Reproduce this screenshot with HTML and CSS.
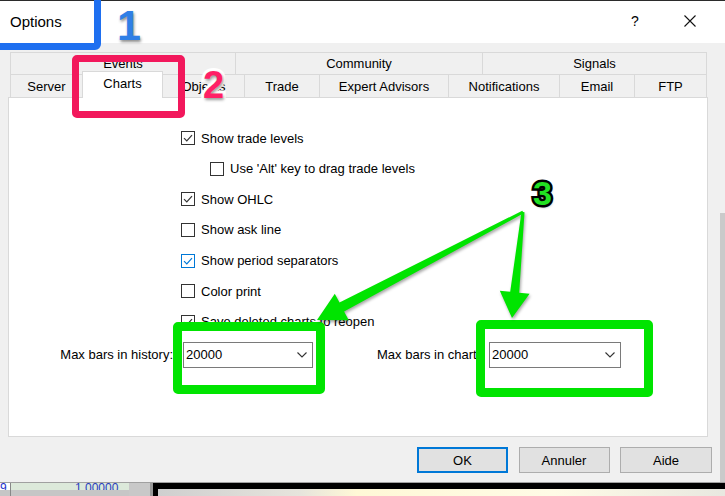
FILE: index.html
```html
<!DOCTYPE html>
<html>
<head>
<meta charset="utf-8">
<title>Options</title>
<link rel="stylesheet" href="styles.css">
</head>
<body>
<div class="screen">
  <div class="dialog">
    <div class="titlebar">
      <span class="title">Options</span>
      <span class="tb-help">?</span>
      <svg class="tb-close" width="12" height="12" viewBox="0 0 12 12"><path d="M0.5 0.5L11.5 11.5M11.5 0.5L0.5 11.5"/></svg>
    </div>
    <div class="dlg-body">
      <div class="tabs">
        <div class="tabrow back">
          <div class="tab t-events">Events</div>
          <div class="tab t-community">Community</div>
          <div class="tab t-signals">Signals</div>
        </div>
        <div class="tabrow front">
          <div class="tab t-server">Server</div>
          <div class="tab t-charts sel">Charts</div>
          <div class="tab t-objects">Objects</div>
          <div class="tab t-trade">Trade</div>
          <div class="tab t-expert">Expert Advisors</div>
          <div class="tab t-notif">Notifications</div>
          <div class="tab t-email">Email</div>
          <div class="tab t-ftp">FTP</div>
        </div>
      </div>
      <div class="panel">
        <div class="checks">
          <label class="chk"><span class="cb"><svg viewBox="0 0 12 12"><path d="M2 6.2L4.8 9L10 3.2"/></svg></span>Show trade levels</label>
          <label class="chk indent"><span class="cb"></span>Use 'Alt' key to drag trade levels</label>
          <label class="chk"><span class="cb"><svg viewBox="0 0 12 12"><path d="M2 6.2L4.8 9L10 3.2"/></svg></span>Show OHLC</label>
          <label class="chk"><span class="cb"></span>Show ask line</label>
          <label class="chk"><span class="cb focus"><svg viewBox="0 0 12 12"><path d="M2 6.2L4.8 9L10 3.2"/></svg></span>Show period separators</label>
          <label class="chk"><span class="cb"></span>Color print</label>
          <label class="chk"><span class="cb"><svg viewBox="0 0 12 12"><path d="M2 6.2L4.8 9L10 3.2"/></svg></span>Save deleted charts to reopen</label>
        </div>
        <div class="maxbars">
          <span class="lbl1">Max bars in history:</span>
          <div class="combo c1"><span>20000</span><svg width="10" height="6" viewBox="0 0 10 6"><path d="M0.5 0.5L5 5L9.5 0.5"/></svg></div>
          <span class="lbl2">Max bars in chart:</span>
          <div class="combo c2"><span>20000</span><svg width="10" height="6" viewBox="0 0 10 6"><path d="M0.5 0.5L5 5L9.5 0.5"/></svg></div>
        </div>
      </div>
      <div class="buttons">
        <div class="btn default">OK</div>
        <div class="btn">Annuler</div>
        <div class="btn aide">Aide</div>
      </div>
    </div>
  </div>
  <div class="taskbar">
    <div class="tb-seg tb-a"><span>9</span></div>
    <div class="tb-seg tb-b"><span>1.00000</span></div>
    <div class="tb-seg tb-c"></div>
    <div class="tb-seg tb-d"></div>
  </div>

  <!-- annotations -->
  <div class="box-blue"></div>
  <div class="num num1">1</div>
  <div class="box-pink"></div>
  <div class="num num2">2</div>
  <div class="box-green g1"></div>
  <div class="box-green g2"></div>
  <svg class="arrows" width="725" height="496" viewBox="0 0 725 496">
    <polygon points="522.3,210.7 339.5,302.6 334.8,293.7 317,320 348.8,320.3 344.1,311.4 523.7,213.3"/>
    <polygon points="521.5,211.8 510.2,291.7 499.8,290.7 512,318 529.6,293.7 519.2,292.7 524.5,212.2"/>
  </svg>
  <div class="num num3">3</div>
</div>
</body>
</html>
```
FILE: styles.css
```css
* { box-sizing: border-box; }
html, body { margin: 0; padding: 0; }
body {
  width: 725px;
  height: 496px;
  overflow: hidden;
  font-family: "Liberation Sans", Arial, sans-serif;
  font-size: 13px;
  color: #000;
  background: #fff;
}
.screen { position: relative; width: 725px; height: 496px; overflow: hidden; }

.dialog { display: flex; flex-direction: column; height: 483px; border-bottom: 1px solid #a0a0a0; }

.titlebar {
  height: 43px;
  flex: none;
  background: #fff;
  border-top: 1px solid #2b2b2b;
  display: flex;
  align-items: center;
  padding: 0 0 2px 10px;
}
.title { font-size: 15px; flex: 1; }
.tb-help { font-size: 14px; width: 8px; text-align: center; margin-right: 45px; }
.tb-close { margin-right: 29px; }
.tb-close path { stroke: #111; stroke-width: 1.1; fill: none; }

.dlg-body {
  flex: 1;
  display: flex;
  flex-direction: column;
  padding: 9px 0 0 8px;
  background: linear-gradient(#cacaca, #cacaca) right 0 top 170px / 5px 100% no-repeat, #f0f0f0;
}

.tabs { margin-left: 2px; width: 697px; }
.tabrow { display: flex; }
.tabrow.back { height: 22px; }
.tabrow.front { height: 23px; align-items: flex-end; }
.tab {
  height: 100%;
  border-top: 1px solid #d9d9d9;
  border-left: 1px solid #d9d9d9;
  display: flex;
  align-items: center;
  justify-content: center;
  white-space: nowrap;
  background: #f0f0f0;
}
.tab:last-child { border-right: 1px solid #d9d9d9; }
.tab.sel {
  height: 27px;
  margin-bottom: -1px;
  position: relative;
  z-index: 1;
  background: #fff;
  border-right: 1px solid #d9d9d9;
  padding-bottom: 4px;
}
.tab.sel + .tab { border-left: none; }

.t-events { width: 225px; }
.t-community { width: 247px; }
.t-signals { width: 225px; }
.t-server { width: 72px; }
.t-charts { width: 81px; }
.t-objects { width: 81px; }
.t-trade { width: 75px; }
.t-expert { width: 129px; }
.t-notif { width: 111px; }
.t-email { width: 75px; }
.t-ftp { width: 73px; }

.panel {
  width: 700px;
  height: 340px;
  flex: none;
  background: #fff;
  border: 1px solid #d9d9d9;
  padding-top: 24.7px;
}
.checks { display: flex; flex-direction: column; padding-left: 172px; }
.chk { height: 30.67px; display: flex; align-items: center; gap: 6px; }
.chk.indent { padding-left: 29px; }
.cb {
  width: 14px;
  height: 14px;
  flex: none;
  border: 1px solid #333;
  background: #fff;
  display: flex;
}
.cb svg { width: 12px; height: 12px; }
.cb path { stroke: #333; stroke-width: 1.2; fill: none; }
.cb.focus { border-color: #0078d7; }
.cb.focus path { stroke: #0078d7; }

.maxbars { display: flex; align-items: center; height: 26px; margin-top: 4.7px; padding-left: 44px; }
.lbl1 { width: 120px; text-align: right; margin-right: 10px; white-space: nowrap; }
.lbl2 { width: 112px; margin-left: 64px; white-space: nowrap; }
.combo {
  height: 26px;
  border: 1px solid #7a7a7a;
  background: #fff;
  display: flex;
  align-items: center;
  justify-content: space-between;
  padding: 0 5px 0 2px;
}
.combo.c1 { width: 130px; }
.combo.c2 { width: 132px; }
.combo path { stroke: #333; stroke-width: 1.1; fill: none; }

.buttons { display: flex; justify-content: flex-end; gap: 10.5px; padding-right: 13px; margin-top: 10px; }
.btn {
  width: 91px;
  height: 26px;
  background: #e1e1e1;
  border: 1px solid #adadad;
  display: flex;
  align-items: center;
  justify-content: center;
}
.btn.default { border: 2px solid #0078d7; }
.btn.aide { width: 92px; }

.taskbar { height: 13px; display: flex; }
.tb-seg { height: 13px; }
.tb-seg span { display: block; height: 7px; overflow: hidden; font-size: 12px; line-height: 11px; }
.tb-a { width: 10px; background: linear-gradient(#fff 0 7px, #c6c6c6 7px); color: #2233cc; }
.tb-b {
  width: 140px;
  border-left: 1px solid #888;
  background: linear-gradient(90deg, transparent 0 118px, #c8c8c8 118px), linear-gradient(#dce9da 0 7px, #c6c6c6 7px 95px);
  color: #2a3ec0;
  padding-left: 64px;
}
.tb-c { width: 8px; background: linear-gradient(90deg, #9a9a9a 0 3px, #000 3px); }
.tb-d {
  flex: 1;
  background: linear-gradient(#000 0 6px, transparent 6px), linear-gradient(90deg, #cfcfcf 0, #e6e4dc 25%, #fff8d6 35%, #fffbe6 70%, #e8e8e0 100%);
}

/* annotations */
.box-blue {
  position: absolute;
  left: -12px;
  top: -12px;
  width: 113px;
  height: 62px;
  border: 7px solid #1e6ff0;
  border-radius: 6px;
}
.box-pink {
  position: absolute;
  left: 72px;
  top: 55px;
  width: 113px;
  height: 63px;
  border: 7px solid #f2185c;
  border-radius: 5px;
}
.box-green {
  position: absolute;
  border: 9px solid #00e400;
  border-radius: 5px;
}
.box-green.g1 { left: 173px; top: 322px; width: 152px; height: 72px; }
.box-green.g2 { left: 476px; top: 320px; width: 177px; height: 77px; }

.arrows { position: absolute; left: 0; top: 0; filter: drop-shadow(1px 2px 1.5px rgba(0,0,0,0.35)); }
.arrows polygon { fill: #00e400; }

.num {
  position: absolute;
  font-family: "Liberation Sans", Arial, sans-serif;
  font-weight: bold;
  line-height: 1;
  paint-order: stroke fill;
}
.num1 {
  left: 117px;
  top: 4px;
  font-size: 43px;
  color: #2f7fe6;
  -webkit-text-stroke: 6px #fff;
  text-shadow: 1px 2px 3px rgba(0,0,0,0.45);
}
.num2 {
  left: 203px;
  top: 66px;
  font-size: 38px;
  color: #ff1f66;
  -webkit-text-stroke: 6px #fff;
  text-shadow: 1px 2px 3px rgba(0,0,0,0.4);
}
.num3 {
  left: 533px;
  top: 176px;
  font-size: 34px;
  color: #22e022;
  -webkit-text-stroke: 5px #000;
  text-shadow: 1px 2px 3px rgba(0,0,0,0.45);
}
```
